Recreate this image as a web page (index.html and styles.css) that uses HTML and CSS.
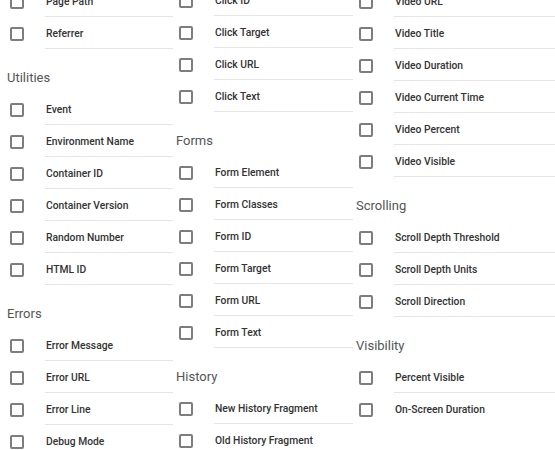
FILE: index.html
```html
<!DOCTYPE html>
<html lang="en">
<head>
    <meta charset="UTF-8">
    <meta name="viewport" content="width=device-width, initial-scale=1.0">
    <title>Built-In Variables</title>
    <link rel="stylesheet" href="styles.css">
</head>
<body>
    <div class="variables">
        <!-- Column 1 -->
        <div class="col">
            <div class="section">
                <div class="row"><span class="box"></span><span class="label">Page Path</span></div>
                <div class="row"><span class="box"></span><span class="label">Referrer</span></div>
            </div>
            <div class="section">
                <h3>Utilities</h3>
                <div class="row"><span class="box"></span><span class="label">Event</span></div>
                <div class="row"><span class="box"></span><span class="label">Environment Name</span></div>
                <div class="row"><span class="box"></span><span class="label">Container ID</span></div>
                <div class="row"><span class="box"></span><span class="label">Container Version</span></div>
                <div class="row"><span class="box"></span><span class="label">Random Number</span></div>
                <div class="row"><span class="box"></span><span class="label">HTML ID</span></div>
            </div>
            <div class="section">
                <h3>Errors</h3>
                <div class="row"><span class="box"></span><span class="label">Error Message</span></div>
                <div class="row"><span class="box"></span><span class="label">Error URL</span></div>
                <div class="row"><span class="box"></span><span class="label">Error Line</span></div>
                <div class="row"><span class="box"></span><span class="label">Debug Mode</span></div>
            </div>
        </div>

        <!-- Column 2 -->
        <div class="col col-mid">
            <div class="section">
                <div class="row"><span class="box"></span><span class="label">Click ID</span></div>
                <div class="row"><span class="box"></span><span class="label">Click Target</span></div>
                <div class="row"><span class="box"></span><span class="label">Click URL</span></div>
                <div class="row"><span class="box"></span><span class="label">Click Text</span></div>
            </div>
            <div class="section">
                <h3>Forms</h3>
                <div class="row"><span class="box"></span><span class="label">Form Element</span></div>
                <div class="row"><span class="box"></span><span class="label">Form Classes</span></div>
                <div class="row"><span class="box"></span><span class="label">Form ID</span></div>
                <div class="row"><span class="box"></span><span class="label">Form Target</span></div>
                <div class="row"><span class="box"></span><span class="label">Form URL</span></div>
                <div class="row"><span class="box"></span><span class="label">Form Text</span></div>
            </div>
            <div class="section">
                <h3>History</h3>
                <div class="row"><span class="box"></span><span class="label">New History Fragment</span></div>
                <div class="row"><span class="box"></span><span class="label">Old History Fragment</span></div>
            </div>
        </div>

        <!-- Column 3 -->
        <div class="col">
            <div class="section">
                <div class="row"><span class="box"></span><span class="label">Video URL</span></div>
                <div class="row"><span class="box"></span><span class="label">Video Title</span></div>
                <div class="row"><span class="box"></span><span class="label">Video Duration</span></div>
                <div class="row"><span class="box"></span><span class="label">Video Current Time</span></div>
                <div class="row"><span class="box"></span><span class="label">Video Percent</span></div>
                <div class="row"><span class="box"></span><span class="label">Video Visible</span></div>
            </div>
            <div class="section">
                <h3>Scrolling</h3>
                <div class="row"><span class="box"></span><span class="label">Scroll Depth Threshold</span></div>
                <div class="row"><span class="box"></span><span class="label">Scroll Depth Units</span></div>
                <div class="row"><span class="box"></span><span class="label">Scroll Direction</span></div>
            </div>
            <div class="section">
                <h3>Visibility</h3>
                <div class="row"><span class="box"></span><span class="label">Percent Visible</span></div>
                <div class="row"><span class="box"></span><span class="label">On-Screen Duration</span></div>
            </div>
        </div>
    </div>
</body>
</html>
```

FILE: styles.css
```css
body {
    font-family: Roboto, "Liberation Sans", Arial, sans-serif;
    margin: 0;
    padding: 0;
    background-color: #fff;
    overflow: hidden;
}

.variables {
    display: grid;
    grid-template-columns: 169px 180px 1fr;
    margin-top: -15px;
    margin-right: 3px;
}

.col-mid {
    margin-top: -1px;
}

.section h3 {
    margin: 0;
    height: 44px;
    padding: 22px 0 0 7px;
    box-sizing: border-box;
    font-size: 13px;
    font-weight: 400;
    color: #555;
    line-height: 14px;
}

.row {
    display: flex;
    align-items: center;
    height: 32px;
}

.box {
    flex: none;
    width: 14px;
    height: 14px;
    margin-left: 10px;
    margin-top: 2px;
    border: 2px solid #7d7d7d;
    border-radius: 2px;
    box-sizing: border-box;
}

.label {
    flex: 1;
    align-self: stretch;
    display: flex;
    align-items: center;
    margin-left: 21px;
    margin-right: -4px;
    padding: 1px 0 0 1px;
    border-bottom: 1px solid #e4e4e4;
    font-size: 10.3px;
    font-weight: 500;
    color: #333;
}

.col > .section:last-child .row:last-child .label {
    border-bottom: none;
}
```
